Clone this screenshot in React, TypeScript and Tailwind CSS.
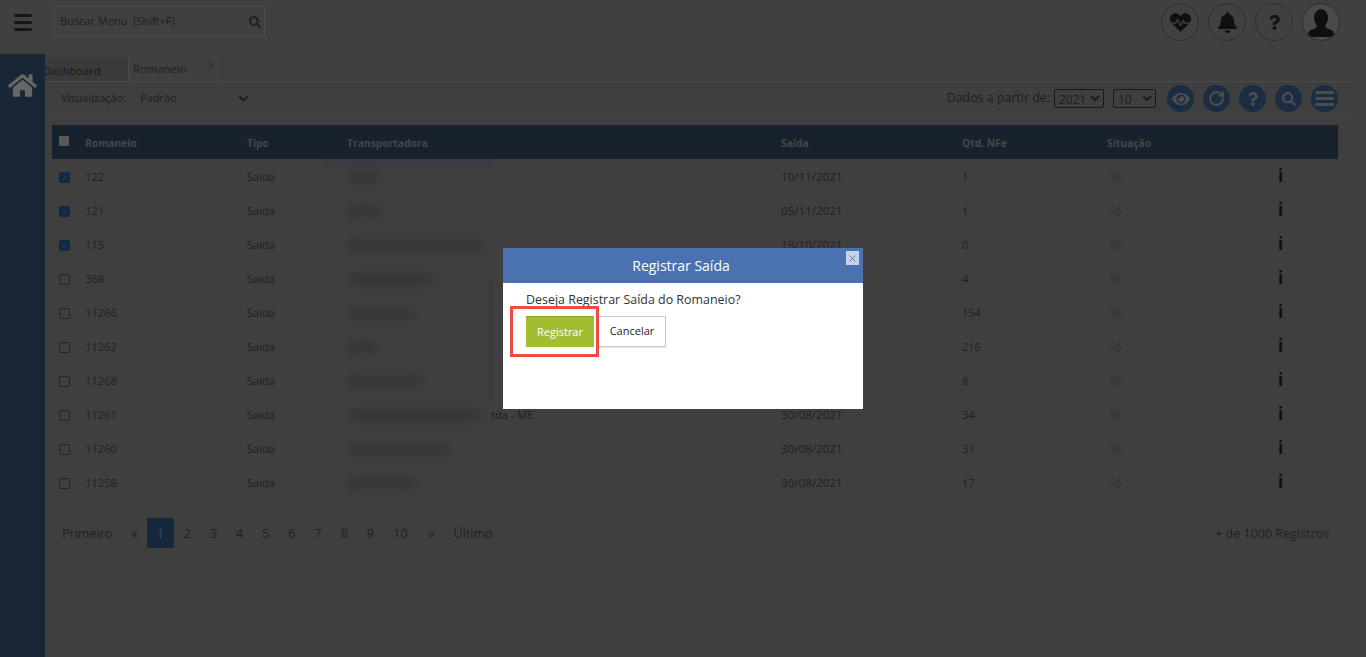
import { FaBell, FaEye, FaHeartbeat, FaHome, FaQuestion, FaSearch } from "react-icons/fa"
import { ChevronDown, RotateCw, X } from "lucide-react"

const rows = [
  { id: "122", saida: "10/11/2021", qtd: "1", checked: true, blur: "w-[34px]" },
  { id: "121", saida: "05/11/2021", qtd: "1", checked: true, blur: "w-[34px]" },
  { id: "115", saida: "18/10/2021", qtd: "0", checked: true, blur: "w-[136px]" },
  { id: "368", saida: "", qtd: "4", checked: false, blur: "w-[88px]" },
  { id: "11266", saida: "", qtd: "154", checked: false, blur: "w-[68px]" },
  { id: "11262", saida: "", qtd: "216", checked: false, blur: "w-[32px]" },
  { id: "11268", saida: "", qtd: "8", checked: false, blur: "w-[76px]" },
  { id: "11261", saida: "30/08/2021", qtd: "34", checked: false, blur: "w-[136px]", tail: "tda - ME" },
  { id: "11260", saida: "30/08/2021", qtd: "31", checked: false, blur: "w-[102px]" },
  { id: "11258", saida: "30/08/2021", qtd: "17", checked: false, blur: "w-[70px]" },
]

const pages = ["2", "3", "4", "5", "6", "7", "8", "9"]

function HeaderIcon({ children, filled }: { children: React.ReactNode; filled?: boolean }) {
  return (
    <div
      className={
        "flex h-[38px] w-[38px] items-center justify-center rounded-full border border-[#2e2e2e] text-[#0f0f0f] " +
        (filled ? "overflow-hidden bg-[#4a4a4a]" : "")
      }
    >
      {children}
    </div>
  )
}

function ToolButton({ children }: { children: React.ReactNode }) {
  return (
    <div className="flex h-[27px] w-[27px] items-center justify-center rounded-full bg-[#1a2d43] text-[#4d4d4d]">
      {children}
    </div>
  )
}

export default function App() {
  return (
    <div className="relative h-[657px] w-[1366px] overflow-hidden bg-[#3f3f3f] font-['Open_Sans',sans-serif] text-[11px] text-[#1e1e1e]">
      {/* barra superior */}
      <div className="flex h-[45px] w-[1350px] items-center bg-[#404040]">
        <div className="ml-[14px] flex w-[18px] flex-col gap-[4px]">
          <span className="h-[3px] rounded-full bg-[#161616]" />
          <span className="h-[3px] rounded-full bg-[#161616]" />
          <span className="h-[3px] rounded-full bg-[#161616]" />
        </div>
        <div className="mb-[2px] ml-[22px] flex h-[31px] w-[211px] items-center justify-between border border-[#4c4c4c] pl-[5px] pr-[3px] text-[#1f1f1f]">
          <span className="whitespace-pre">Buscar Menu  (Shift+F)</span>
          <FaSearch className="h-[12px] w-[12px] text-[#1f1f1f]" />
        </div>
        <div className="mb-[1px] ml-auto mr-[10px] flex gap-[9px]">
          <HeaderIcon>
            <FaHeartbeat className="h-[21px] w-[21px]" />
          </HeaderIcon>
          <HeaderIcon>
            <FaBell className="h-[21px] w-[19px]" />
          </HeaderIcon>
          <HeaderIcon>
            <FaQuestion className="h-[15px] w-[15px] text-[#141414]" />
          </HeaderIcon>
          <HeaderIcon filled>
            <svg viewBox="0 0 28 30" className="mt-[3px] h-[30px] w-[28px]" fill="currentColor">
              <ellipse cx="14" cy="9" rx="7" ry="9" />
              <path d="M10 15h8l1 4 6 2.500c1.500.7 2 2.500 2 6.500H1c0-4 .5-5.800 2-6.500L9 19z" />
            </svg>
          </HeaderIcon>
        </div>
      </div>

      <div className="mt-[9px] flex h-[603px]">
        {/* menu lateral */}
        <aside className="w-[45px] shrink-0 bg-[#192636] pl-[8px] pt-[17px]">
          <FaHome className="h-[29px] w-[29px] text-[#666666]" />
        </aside>

        <main className="min-w-0 flex-1">
          {/* abas */}
          <div className="flex h-[28px] w-[1307px] items-end overflow-hidden border-b border-[#4a4a4a]">
            <div className="-ml-[2px] flex h-[23px] w-[85px] shrink-0 items-center bg-[#3a3a3a] pt-[4px] text-[11.200px] text-[#1a1a1a]">
              Dashboard
            </div>
            <div className="relative flex h-[26px] w-[90px] items-center border-x border-t border-x-[#4a4a4a] border-t-[#26426a] bg-[#404040] pl-[4px] pt-[1px] text-[11.300px] text-[#1f1f1f]">
              Romaneio
              <span className="absolute right-[3px] top-[2px] text-[10px] text-[#2c2c2c]">X</span>
            </div>
          </div>

          {/* barra de filtros */}
          <div className="flex h-[34px] w-[1307px] items-center border-b border-[#444444] pl-[16px] pr-[14px]">
            <span className="text-[#1e1e1e]">Visualização:</span>
            <span className="ml-[14px] text-[#1f1f1f]">Padrão</span>
            <ChevronDown className="ml-[59px] h-[15px] w-[15px] text-[#191919]" strokeWidth={2.5} />
            <span className="ml-auto text-[12.400px] text-[#1e1e1e]">Dados a partir de:</span>
            <select
              defaultValue="2021"
              className="ml-[4px] h-[19px] w-[50px] rounded-[2px] border border-[#191919] bg-transparent text-[12px] text-[#1e1e1e]"
            >
              <option>2021</option>
            </select>
            <select
              defaultValue="10"
              className="ml-[9px] h-[19px] w-[43px] rounded-[2px] border border-[#191919] bg-transparent text-[12px] text-[#1e1e1e]"
            >
              <option>10</option>
            </select>
            <div className="ml-[11px] flex gap-[9px]">
              <ToolButton>
                <FaEye className="h-[18px] w-[18px]" />
              </ToolButton>
              <ToolButton>
                <RotateCw className="h-[17px] w-[17px]" strokeWidth={3} />
              </ToolButton>
              <ToolButton>
                <FaQuestion className="h-[14px] w-[14px]" />
              </ToolButton>
              <ToolButton>
                <FaSearch className="h-[14px] w-[14px]" />
              </ToolButton>
              <ToolButton>
                <div className="flex w-[19px] flex-col gap-[3px]">
                  <span className="h-[3px] rounded-full bg-[#4d4d4d]" />
                  <span className="h-[3px] rounded-full bg-[#4d4d4d]" />
                  <span className="h-[3px] rounded-full bg-[#4d4d4d]" />
                </div>
              </ToolButton>
            </div>
          </div>

          {/* tabela */}
          <div className="ml-[7px] mt-[9px] w-[1286px]">
            <div className="grid h-[34px] grid-cols-[33px_162px_100px_434px_181px_145px_173px_1fr] items-center bg-[#18222f] pt-[4px] text-[10.300px] font-bold text-[#464646]">
              <span className="mb-[6px] ml-[7px] block h-[10px] w-[10px] rounded-[1px] bg-[#5a5a5a]" />
              <span>Romaneio</span>
              <span>Tipo</span>
              <span>Transportadora</span>
              <span>Saída</span>
              <span>Qtd. NFe</span>
              <span>Situação</span>
              <span />
            </div>
            {rows.map((row) => (
              <div
                key={row.id}
                className="grid h-[34px] grid-cols-[33px_162px_100px_434px_181px_145px_173px_1fr] items-center pt-[2px]"
              >
                {row.checked ? (
                  <span className="ml-[7px] flex h-[11px] w-[11px] items-center justify-center rounded-[2px] bg-[#12294a] text-[9px] leading-none text-[#3f3f3f]">
                    ✓
                  </span>
                ) : (
                  <span className="ml-[7px] block h-[11px] w-[11px] rounded-[2px] border border-[#242424]" />
                )}
                <span className="text-[11.200px] text-[#262020]">{row.id}</span>
                <span className="text-[#1f1f1f]">Saída</span>
                <span className="flex items-center">
                  <span className={"block h-[13px] rounded-full bg-[#373737] blur-[4px] " + row.blur} />
                  {row.tail && <span className="ml-[8px] text-[#1f1f1f]">{row.tail}</span>}
                </span>
                <span className="text-[11.600px] text-[#1f1f1f]">{row.saida}</span>
                <span className="text-[#1f1f1f]">{row.qtd}</span>
                <span className="pl-[3px] text-[14px] leading-none text-[#333333]">%</span>
                <span className="mb-[3px] -ml-[2px] text-[17px] font-bold leading-none text-[#0f0f0f]">i</span>
              </div>
            ))}

            {/* paginação */}
            <div className="mt-[19px] flex h-[30px] items-center pt-[2px] text-[12.500px] text-[#1f1f1f]">
              <span className="ml-[10px] w-[69px]">Primeiro</span>
              <span className="w-[16px]">«</span>
              <span className="-mt-[2px] flex h-[30px] w-[27px] items-center justify-center bg-[#16293c] pt-[2px] text-[#3d4b58]">
                1
              </span>
              {pages.map((page) => (
                <span key={page} className="w-[26.200px] text-center">
                  {page}
                </span>
              ))}
              <span className="ml-[2px] w-[30px] text-center">10</span>
              <span className="w-[31px] text-center">»</span>
              <span className="ml-[7px]">Último</span>
              <span className="ml-auto mr-[9px] text-[#222222]">+ de 1000 Registros</span>
            </div>
          </div>
        </main>
      </div>

      {/* resto do popover borrado atrás do modal */}
      <div className="pointer-events-none absolute left-[323px] top-[159px] h-[12px] w-[170px] bg-gradient-to-b from-[#363a40] to-transparent" />
      <div className="pointer-events-none absolute left-[488px] top-[280px] h-[120px] w-[7px] bg-gradient-to-r from-transparent via-[#3a3a3a] to-transparent" />

      {/* modal */}
      <div className="absolute inset-0 flex items-center justify-center">
        <div className="relative h-[161px] w-[360px] bg-white">
          <div className="flex h-[35px] items-center justify-center bg-[#4a72b0] pr-[4px] text-[14px] font-medium text-white">
            Registrar Saída
          </div>
          <button className="absolute right-[4px] top-[3px] flex h-[14px] w-[13px] items-center justify-center bg-[#c6d2e6] text-[#4a72b0]">
            <X className="h-[11px] w-[11px]" strokeWidth={2} />
          </button>
          <p className="ml-[23px] mt-[8px] text-[12.450px] leading-[17px] text-[#333333]">
            Deseja Registrar Saída do Romaneio?
          </p>
          <div className="ml-[23px] mt-[8px] flex h-[31px] gap-[4px]">
            <button className="w-[68px] border-t border-[#8fa82a] bg-[#a2bd30] text-[11px] font-medium text-white">
              Registrar
            </button>
            <button className="w-[68px] border border-[#c9c9c9] bg-white text-[11px] text-[#222222] shadow-[0_1px_1px_rgba(0,0,0,0.1)]">
              Cancelar
            </button>
          </div>
          <div className="absolute left-[7px] top-[58px] h-[51px] w-[89px] border-[3px] border-[#ef4b45]" />
        </div>
      </div>
    </div>
  )
}
